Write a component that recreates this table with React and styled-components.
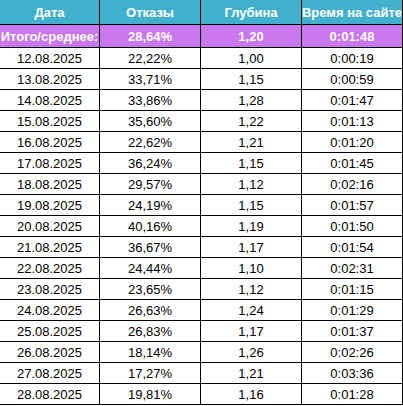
import React from "react";
import styled, { createGlobalStyle } from "styled-components";

const Global = createGlobalStyle`
  html, body { margin: 0; padding: 0; background: #fff; }
  body { font-family: "Liberation Sans", Arial, sans-serif; overflow: hidden; }
`;

const Grid = styled.div`
  display: grid;
  grid-template-columns: 99px 100px 100px 100px;
  grid-auto-rows: 20px;
  gap: 1px;
  padding: 0 1px 1px 0;
  width: max-content;
  background: #000;
`;

const Cell = styled.div`
  display: flex;
  align-items: center;
  justify-content: center;
  white-space: nowrap;
  font-size: 13px;
  color: ${(p) => (p.$kind === "body" ? "#000" : "#fff")};
  font-weight: ${(p) => (p.$kind === "body" ? 400 : 700)};
  background: ${(p) =>
    p.$kind === "head" ? "#41b0cc" : p.$kind === "total" ? "#c877ec" : "#fff"};
  height: ${(p) => (p.$kind === "head" ? "24px" : p.$kind === "total" ? "22px" : "20px")};
  padding-top: ${(p) => (p.$kind === "body" ? "1px" : "0")};
  box-sizing: border-box;
`;

const head = ["Дата", "Отказы", "Глубина", "Время на сайте"];
const total = ["Итого/среднее:", "28,64%", "1,20", "0:01:48"];
const rows = [
  ["12.08.2025", "22,22%", "1,00", "0:00:19"],
  ["13.08.2025", "33,71%", "1,15", "0:00:59"],
  ["14.08.2025", "33,86%", "1,28", "0:01:47"],
  ["15.08.2025", "35,60%", "1,22", "0:01:13"],
  ["16.08.2025", "22,62%", "1,21", "0:01:20"],
  ["17.08.2025", "36,24%", "1,15", "0:01:45"],
  ["18.08.2025", "29,57%", "1,12", "0:02:16"],
  ["19.08.2025", "24,19%", "1,15", "0:01:57"],
  ["20.08.2025", "40,16%", "1,19", "0:01:50"],
  ["21.08.2025", "36,67%", "1,17", "0:01:54"],
  ["22.08.2025", "24,44%", "1,10", "0:02:31"],
  ["23.08.2025", "23,65%", "1,12", "0:01:15"],
  ["24.08.2025", "26,63%", "1,24", "0:01:29"],
  ["25.08.2025", "26,83%", "1,17", "0:01:37"],
  ["26.08.2025", "18,14%", "1,26", "0:02:26"],
  ["27.08.2025", "17,27%", "1,21", "0:03:36"],
  ["28.08.2025", "19,81%", "1,16", "0:01:28"],
];

const HeadRow = styled.div`
  display: contents;
`;

export default function App() {
  return (
    <>
      <Global />
      <Grid style={{ gridTemplateRows: "24px 22px" }}>
        <HeadRow>
          {head.map((h) => (
            <Cell key={h} $kind="head">{h}</Cell>
          ))}
        </HeadRow>
        <HeadRow>
          {total.map((t) => (
            <Cell key={t} $kind="total">{t}</Cell>
          ))}
        </HeadRow>
        {rows.map((r) =>
          r.map((v, i) => (
            <Cell key={r[0] + i} $kind="body">{v}</Cell>
          ))
        )}
      </Grid>
    </>
  );
}
